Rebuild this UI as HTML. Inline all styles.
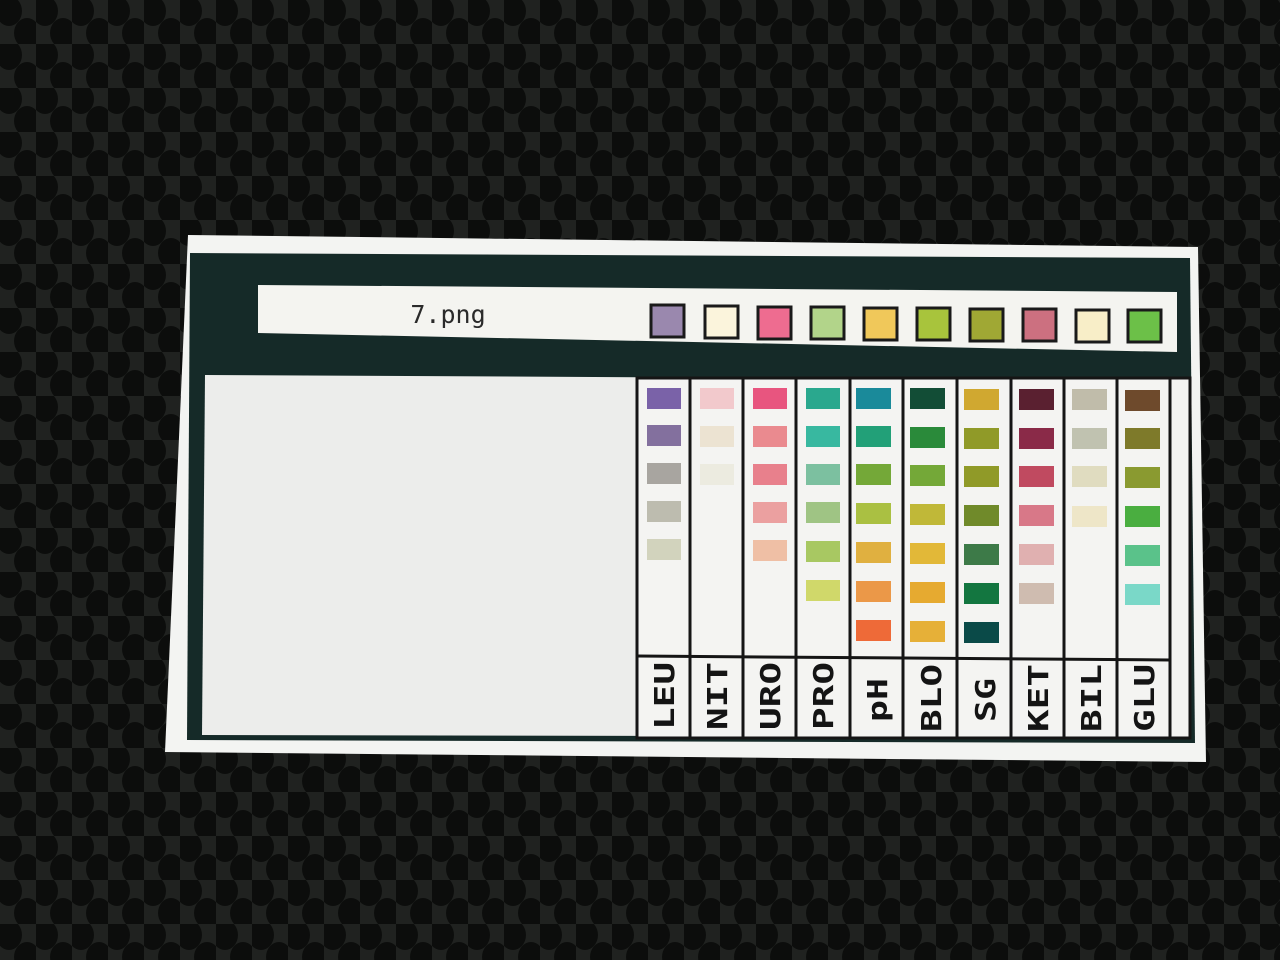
<!DOCTYPE html>
<html><head><meta charset="utf-8"><style>
html,body{margin:0;padding:0;width:1280px;height:960px;overflow:hidden;background:#141514}
svg{display:block}
</style></head><body>
<svg width="1280" height="960" viewBox="0 0 1280 960" xmlns="http://www.w3.org/2000/svg">
<defs>
<pattern id="mesh" width="36" height="44" patternUnits="userSpaceOnUse">
<rect width="36" height="44" fill="#202220"/>
<ellipse cx="9" cy="11" rx="13" ry="15" fill="#0c0d0c"/>
<ellipse cx="27" cy="33" rx="13" ry="15" fill="#0c0d0c"/>
</pattern>
</defs>
<rect width="1280" height="960" fill="url(#mesh)"/>
<polygon points="188,235 1198,247 1206,762 165,752" fill="#f3f4f2"/>
<polygon points="190,253 1190,258 1195,743 187,740" fill="#152a28"/>
<polygon points="205,375 1188,380 1190,737 202,735" fill="#ecedeb"/>
<polygon points="258,285 1177,292 1177,352 258,333" fill="#f4f4f0"/>
<text x="448" y="323" font-family="DejaVu Sans Mono, Liberation Mono, monospace" font-size="25" fill="#2a2a2a" text-anchor="middle">7.png</text>
<g stroke="#1a1a1a" stroke-width="3">
<rect x="651" y="305" width="33" height="32" fill="#9a88ae"/>
<rect x="705" y="306" width="33" height="32" fill="#fbf4dc"/>
<rect x="758" y="307" width="33" height="32" fill="#ee6c90"/>
<rect x="811" y="307" width="33" height="32" fill="#b2d48a"/>
<rect x="864" y="308" width="33" height="32" fill="#f0c85a"/>
<rect x="917" y="308" width="33" height="32" fill="#a8c43c"/>
<rect x="970" y="309" width="33" height="32" fill="#a0a834"/>
<rect x="1023" y="309" width="33" height="32" fill="#cc7080"/>
<rect x="1076" y="310" width="33" height="32" fill="#f8eec8"/>
<rect x="1128" y="310" width="33" height="32" fill="#6cc048"/>
</g>
<g stroke="#151515" stroke-width="3">
<rect x="637" y="378" width="553" height="360" fill="#f4f4f2"/>
</g>
<g stroke="#151515" stroke-width="3">
<line x1="690" y1="378" x2="690" y2="738"/>
<line x1="743" y1="378" x2="743" y2="738"/>
<line x1="796" y1="378" x2="796" y2="738"/>
<line x1="850" y1="378" x2="850" y2="738"/>
<line x1="903" y1="378" x2="903" y2="738"/>
<line x1="957" y1="378" x2="957" y2="738"/>
<line x1="1011" y1="378" x2="1011" y2="738"/>
<line x1="1064" y1="378" x2="1064" y2="738"/>
<line x1="1117" y1="378" x2="1117" y2="738"/>
<line x1="1170" y1="378" x2="1170" y2="738"/>
<line x1="637" y1="656" x2="1170" y2="660"/>
</g>
<g>
<rect x="647" y="388" width="34" height="21" fill="#7a62a8"/><rect x="647" y="425" width="34" height="21" fill="#83709e"/><rect x="647" y="463" width="34" height="21" fill="#a8a5a0"/><rect x="647" y="501" width="34" height="21" fill="#bdbcaf"/><rect x="647" y="539" width="34" height="21" fill="#d2d3bd"/>
<rect x="700" y="388" width="34" height="21" fill="#f2c9cc"/><rect x="700" y="426" width="34" height="21" fill="#ece3d2"/><rect x="700" y="464" width="34" height="21" fill="#ecebe0"/>
<rect x="753" y="388" width="34" height="21" fill="#e8557f"/><rect x="753" y="426" width="34" height="21" fill="#ea8a8f"/><rect x="753" y="464" width="34" height="21" fill="#e8808c"/><rect x="753" y="502" width="34" height="21" fill="#eba0a0"/><rect x="753" y="540" width="34" height="21" fill="#efbfa5"/>
<rect x="806" y="388" width="34" height="21" fill="#2aa88e"/><rect x="806" y="426" width="34" height="21" fill="#38b8a0"/><rect x="806" y="464" width="34" height="21" fill="#7cc0a0"/><rect x="806" y="502" width="34" height="21" fill="#9fc484"/><rect x="806" y="541" width="34" height="21" fill="#a8c862"/><rect x="806" y="580" width="34" height="21" fill="#d0d86a"/>
<rect x="856" y="388" width="35" height="21" fill="#1a8a9a"/><rect x="856" y="426" width="35" height="21" fill="#22a078"/><rect x="856" y="464" width="35" height="21" fill="#74a838"/><rect x="856" y="503" width="35" height="21" fill="#aac042"/><rect x="856" y="542" width="35" height="21" fill="#e0b040"/><rect x="856" y="581" width="35" height="21" fill="#eb9848"/><rect x="856" y="620" width="35" height="21" fill="#ee6a38"/>
<rect x="910" y="388" width="35" height="21" fill="#124d36"/><rect x="910" y="427" width="35" height="21" fill="#2a8a3a"/><rect x="910" y="465" width="35" height="21" fill="#74a838"/><rect x="910" y="504" width="35" height="21" fill="#c0b838"/><rect x="910" y="543" width="35" height="21" fill="#e2b838"/><rect x="910" y="582" width="35" height="21" fill="#e6aa30"/><rect x="910" y="621" width="35" height="21" fill="#e6b038"/>
<rect x="964" y="389" width="35" height="21" fill="#d0a830"/><rect x="964" y="428" width="35" height="21" fill="#909a28"/><rect x="964" y="466" width="35" height="21" fill="#909a28"/><rect x="964" y="505" width="35" height="21" fill="#708a2a"/><rect x="964" y="544" width="35" height="21" fill="#3d7a48"/><rect x="964" y="583" width="35" height="21" fill="#137640"/><rect x="964" y="622" width="35" height="21" fill="#0a4a48"/>
<rect x="1019" y="389" width="35" height="21" fill="#5a2030"/><rect x="1019" y="428" width="35" height="21" fill="#8a2a48"/><rect x="1019" y="466" width="35" height="21" fill="#c04a60"/><rect x="1019" y="505" width="35" height="21" fill="#d87888"/><rect x="1019" y="544" width="35" height="21" fill="#e0b0b0"/><rect x="1019" y="583" width="35" height="21" fill="#cfbcb0"/>
<rect x="1072" y="389" width="35" height="21" fill="#c0bcaa"/><rect x="1072" y="428" width="35" height="21" fill="#c0c2b0"/><rect x="1072" y="466" width="35" height="21" fill="#e0dcc0"/><rect x="1072" y="506" width="35" height="21" fill="#eee6c8"/>
<rect x="1125" y="390" width="35" height="21" fill="#6e4a2c"/><rect x="1125" y="428" width="35" height="21" fill="#7e7a2a"/><rect x="1125" y="467" width="35" height="21" fill="#8a9a30"/><rect x="1125" y="506" width="35" height="21" fill="#4aae40"/><rect x="1125" y="545" width="35" height="21" fill="#5ac28a"/><rect x="1125" y="584" width="35" height="21" fill="#7ad8c8"/>
</g>
<g font-family="DejaVu Sans Mono, Liberation Mono, monospace" font-weight="bold" font-size="28" fill="#141414">
<text transform="translate(674,730) rotate(-90)" textLength="68" lengthAdjust="spacingAndGlyphs">LEU</text>
<text transform="translate(727,730) rotate(-90)" textLength="68" lengthAdjust="spacingAndGlyphs">NIT</text>
<text transform="translate(780,730) rotate(-90)" textLength="68" lengthAdjust="spacingAndGlyphs">URO</text>
<text transform="translate(833,730) rotate(-90)" textLength="68" lengthAdjust="spacingAndGlyphs">PRO</text>
<text transform="translate(887,722) rotate(-90)" textLength="44" lengthAdjust="spacingAndGlyphs">pH</text>
<text transform="translate(941,732) rotate(-90)" textLength="68" lengthAdjust="spacingAndGlyphs">BLO</text>
<text transform="translate(995,722) rotate(-90)" textLength="44" lengthAdjust="spacingAndGlyphs">SG</text>
<text transform="translate(1048,732) rotate(-90)" textLength="68" lengthAdjust="spacingAndGlyphs">KET</text>
<text transform="translate(1101,732) rotate(-90)" textLength="68" lengthAdjust="spacingAndGlyphs">BIL</text>
<text transform="translate(1154,732) rotate(-90)" textLength="68" lengthAdjust="spacingAndGlyphs">GLU</text>
</g>
</svg>
</body></html>
